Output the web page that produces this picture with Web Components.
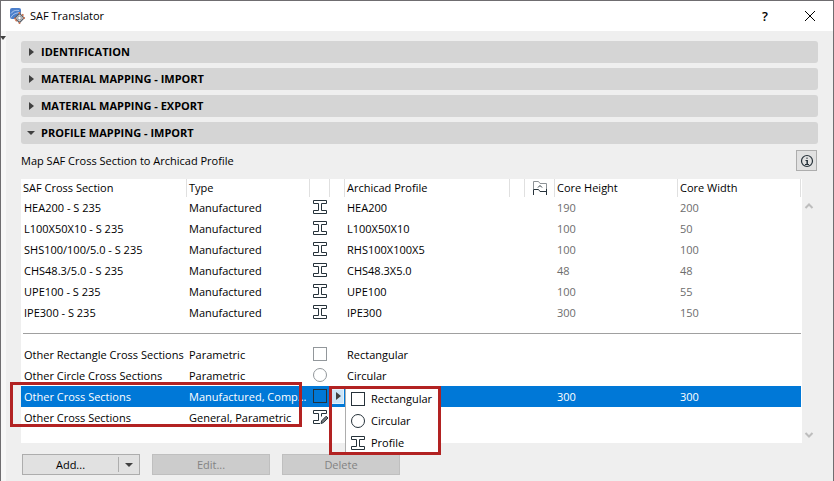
<!DOCTYPE html>
<html lang="en">
<head>
<meta charset="utf-8">
<title>SAF Translator</title>
<style>
  body { margin: 0; font: 11px/16px "Open Sans", "Noto Sans", sans-serif; color: #000; background: #efefef; }
</style>
</head>
<body>
<saf-window>
  <span slot="title">SAF Translator</span>
  <saf-section>IDENTIFICATION</saf-section>
  <saf-section>MATERIAL MAPPING - IMPORT</saf-section>
  <saf-section>MATERIAL MAPPING - EXPORT</saf-section>
  <saf-section open>PROFILE MAPPING - IMPORT</saf-section>
  <saf-caption>Map SAF Cross Section to Archicad Profile</saf-caption>
  <saf-mapping></saf-mapping>
  <saf-actions>
    <saf-button menu>Add...</saf-button>
    <saf-button disabled>Edit...</saf-button>
    <saf-button disabled>Delete</saf-button>
  </saf-actions>
</saf-window>

<script>
const RESET = `*{box-sizing:border-box} button{font:inherit;color:inherit;margin:0;padding:0;border:0;background:none;border-radius:0}`;

const define = (name, html) => customElements.define(name, class extends HTMLElement {
  connectedCallback() {
    if (this.shadowRoot) return;
    const root = this.attachShadow({ mode: 'open' });
    root.innerHTML = `<style>${RESET}</style>` + (typeof html === 'function' ? html(this) : html);
  }
});

const ICONS = {
  rect: '<rect x=".5" y=".5" width="13" height="13"/>',
  circle: '<circle cx="7" cy="7" r="6.500"/>',
  profile: '<path d="M.5.5h13v3h-5v7h5v3H.5v-3h5v-7h-5z"/>',
  edit: '<path d="M7 13.500H.5v-3h5v-7h-5v-3h13v3h-5v3"/><path d="M8 13.500l.7-2.800 4.500-4.500 1.800 1.800-4.500 4.600z" fill="#75797c"/>',
  flag: '<path d="M.5 8V.5h5l1.500 2h6.500V8" stroke="#8d9296"/><path d="M.5 14V8.500h5l1.500 2h6.500V14M13.500 14V8M5 6.500l2-2 2 2"/>',
  info: '<circle cx="7" cy="7" r="5.500" stroke-width="1.200"/><path d="M7 3.500v1.500M5.500 6.500H7M5 10.500h4" /><path d="M7.200 6v4.500" stroke-width="1.500"/>',
  right: '<path d="M5 3l5 4-5 4z" fill="#404040" stroke="none"/>',
  down: '<path d="M3 5h8l-4 4z" fill="#404040" stroke="none"/>',
  up2: '<path d="M3.500 9L7 5.500 10.500 9" stroke="#bdbdbd" stroke-width="2"/>',
  down2: '<path d="M3.500 6L7 9.500 10.500 6" stroke="#bdbdbd" stroke-width="2"/>',
  close: '<path d="M2 2l10 10M12 2L2 12" stroke="#000"/>',
  app: '<rect width="11" height="11" rx="2" y="-1" x="0" fill="#4b7fcb" stroke="none"/><path d="M1 4.500c3-4 6-3 8-3M1 8.500c2-4 5-4 8-5" stroke="#b6cdf0"/><path d="M9.500 4.500l4.500 4.500-4.500 4.500L5 9z" fill="#eee" stroke="#59616b" stroke-width="1.300"/><path d="M4 9.500h2M13 9h2M9.500 3v2M9.500 13v2M12 5.500l1.500 1M7 12l-1.500-1" stroke="#c8714f" stroke-width="1.600"/><circle cx="9.500" cy="9" r="1.800" fill="#fff" stroke="#87919d"/>'
};

define('saf-icon', el => `<style>
  :host{display:inline-block;flex:none;width:14px;height:14px;color:#26323a}
  svg{display:block;overflow:visible}
</style><svg width="14" height="14" viewBox="0 0 14 14" fill="none" stroke="currentColor" aria-hidden="true">${ICONS[el.getAttribute('name')]}</svg>`);

define('saf-window', `<style>
  :host{display:block;min-height:100vh;border:solid #6f6d70;border-width:1px 1px 0;background:#efefef;box-sizing:border-box}
  header{display:flex;align-items:center;height:30px;padding:0 16px 0 9px;background:#fff}
  .title{flex:1;padding-left:6px}
  header button{display:flex;justify-content:center;align-items:center;width:14px;height:20px}
  .help{margin-right:31px;font-size:13px;font-weight:600}
  .frame{display:flex;align-items:stretch;min-height:calc(100vh - 31px)}
  .rail{flex:none;width:5px;background:#f7f7f7}
  .rail svg{display:block;margin:5px 0 0 -1px}
  main{flex:1;min-width:0;padding:10px 15px 6px}
</style>
<header><saf-icon name="app"></saf-icon><div class="title"><slot name="title"></slot></div>
<button class="help" aria-label="Help">?</button><button aria-label="Close"><saf-icon name="close"></saf-icon></button></header>
<div class="frame"><div class="rail"><svg width="6" height="4" viewBox="0 0 6 4" aria-hidden="true"><path d="M0 0h6L3 4z" fill="#404040"/></svg></div><main><slot></slot></main></div>`);

define('saf-section', el => `<style>
  :host{display:block;margin-bottom:5px}
  button{display:flex;align-items:center;gap:3px;width:100%;height:22px;padding:0 3px;border-radius:3px;background:#d5d5d5;font-weight:700;text-align:left}
</style><button aria-expanded="${el.hasAttribute('open')}"><saf-icon name="${el.hasAttribute('open') ? 'down' : 'right'}"></saf-icon><span><slot></slot></span></button>`);

define('saf-caption', `<style>
  :host{display:flex;align-items:center;justify-content:space-between;margin:6px 1px 8px 0}
  button{display:flex;align-items:center;justify-content:center;width:21px;height:21px;border:1px solid #adadad;background:#e1e1e1}
</style><span><slot></slot></span><button aria-label="Information"><saf-icon name="info"></saf-icon></button>`);

define('saf-actions', `<style>:host{display:flex;gap:12px;margin:11px 1px 0}</style><slot></slot>`);

define('saf-button', el => {
  const off = el.hasAttribute('disabled') ? 'disabled' : '';
  const menu = el.hasAttribute('menu') ? '<button class="drop" aria-label="More add options"><saf-icon name="down"></saf-icon></button>' : '';
  return `<style>
  :host{display:flex;width:118px;height:21px;border:1px solid #adadad;background:#e1e1e1;box-sizing:border-box}
  :host([disabled]){border-color:#bfbfbf;background:#ccc;color:#838383}
  .main{flex:1}
  .drop{display:flex;justify-content:center;align-items:center;width:21px;margin:2px 0;border-left:1px solid #adadad}
</style><button class="main" ${off}><slot></slot></button>${menu}`;
});

define('saf-shape-menu', `<style>
  :host{display:block;background:#fff;border:1px solid #adadad;border-top-color:#fff;border-right-color:#fff}
  button{display:flex;align-items:center;gap:6px;width:100%;height:22px;padding:0 5px}
</style><div role="menu">
<button role="menuitem"><saf-icon name="rect"></saf-icon>Rectangular</button>
<button role="menuitem"><saf-icon name="circle"></saf-icon>Circular</button>
<button role="menuitem"><saf-icon name="profile"></saf-icon>Profile</button></div>`);

const ROWS = [
  ['HEA200 - S 235', 'Manufactured', 'profile', 'HEA200', '190', '200'],
  ['L100X50X10 - S 235', 'Manufactured', 'profile', 'L100X50X10', '100', '50'],
  ['SHS100/100/5.0 - S 235', 'Manufactured', 'profile', 'RHS100X100X5', '100', '100'],
  ['CHS48.3/5.0 - S 235', 'Manufactured', 'profile', 'CHS48.3X5.0', '48', '48'],
  ['UPE100 - S 235', 'Manufactured', 'profile', 'UPE100', '100', '55'],
  ['IPE300 - S 235', 'Manufactured', 'profile', 'IPE300', '300', '150'],
  null,
  ['Other Rectangle Cross Sections', 'Parametric', 'rect', 'Rectangular', '', '', 'soft'],
  ['Other Circle Cross Sections', 'Parametric', 'circle', 'Circular', '', '', 'soft'],
  ['Other Cross Sections', 'Manufactured, Comp...', 'rect', '', '300', '300', 'selected'],
  ['Other Cross Sections', 'General, Parametric', 'edit', '', '', '']
];
const row = r => r === null
  ? '<tr class="rule"><td colspan="9"><hr></td></tr>'
  : `<tr class="${r[6] || ''}"><td>${r[0]}</td><td>${r[1]}</td><td class="ic"><saf-icon name="${r[2]}"></saf-icon></td><td class="ic">${r[6] === 'selected' ? '<button aria-label="Choose shape" aria-haspopup="menu"><saf-icon name="right"></saf-icon></button>' : ''}</td><td>${r[3]}</td><td></td><td></td><td class="num">${r[4]}</td><td class="num">${r[5]}</td></tr>`;

define('saf-mapping', () => `<style>
  :host{display:flex}
  .grid{position:relative;flex:1;min-width:0;padding:0 1px 15px 0;background:#fff}
  table{width:100%;table-layout:fixed;border-collapse:separate;border-spacing:0}
  th,td{padding:1px 0 0 2px;text-align:left;font-weight:400;white-space:nowrap}
  th{height:18px;padding-top:0;border-right:1px solid #e0e0e0}
  td{height:21px}
  td:first-child{padding-left:3px}
  td.ic{padding:0 0 1px 3px}
  td.ic+.ic{padding:0 0 1px 1px}
  saf-icon{display:block}
  th saf-icon{margin-left:6px}
  .num{color:#6d6d6d}
  .soft saf-icon{color:#92979b}
  .selected td{background:#0078d7;color:#fff}
  .selected button{display:flex;align-items:center;justify-content:center;width:13px;height:15px;background:#cce4f7;border:1px solid #e5f1fb}
  tr.rule td{padding:0 0 0 2px;vertical-align:top}
  hr{margin:10px 0 0;border:0;border-top:1px solid #a0a0a0}
  .scroll{display:flex;flex-direction:column;justify-content:space-between;width:16px;padding:20px 0 2px}
  .scroll button{width:14px;height:14px}
  saf-shape-menu{position:absolute;left:324px;top:208px;width:95px}
  .mark{position:absolute;border:3px solid #b22222;pointer-events:none}
  .mark.a{left:-11px;top:203px;width:292px;height:45px}
  .mark.b{left:308px;top:207px;width:112px;height:69px}
</style>
<div class="grid"><table>
<colgroup><col style="width:166px"><col style="width:123px"><col style="width:20px"><col style="width:15px"><col style="width:165px"><col style="width:15px"><col style="width:30px"><col style="width:123px"><col></colgroup>
<thead><tr><th>SAF Cross Section</th><th>Type</th><th></th><th></th><th>Archicad Profile</th><th></th><th><saf-icon name="flag"></saf-icon></th><th>Core Height</th><th>Core Width</th></tr></thead>
<tbody>${ROWS.map(row).join('')}</tbody></table>
<saf-shape-menu></saf-shape-menu><div class="mark a"></div><div class="mark b"></div></div>
<div class="scroll"><button aria-label="Scroll up"><saf-icon name="up2"></saf-icon></button><button aria-label="Scroll down"><saf-icon name="down2"></saf-icon></button></div>`);
</script>
</body>
</html>
